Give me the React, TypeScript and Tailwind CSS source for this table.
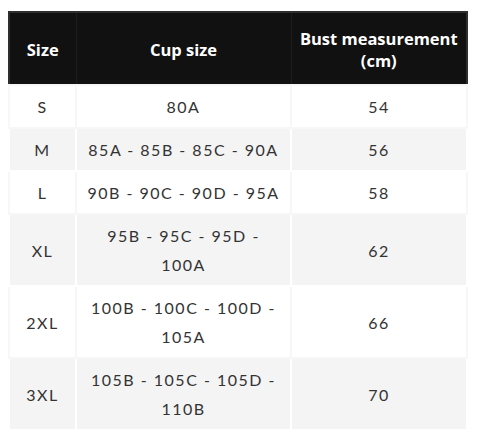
const rows: { size: string; cup: string[]; bust: string }[] = [
  { size: "S", cup: ["80A"], bust: "54" },
  { size: "M", cup: ["85A - 85B - 85C - 90A"], bust: "56" },
  { size: "L", cup: ["90B - 90C - 90D - 95A"], bust: "58" },
  { size: "XL", cup: ["95B - 95C - 95D -", "100A"], bust: "62" },
  { size: "2XL", cup: ["100B - 100C - 100D -", "105A"], bust: "66" },
  { size: "3XL", cup: ["105B - 105C - 105D -", "110B"], bust: "70" },
];

export default function App() {
  return (
    <div className="h-[442px] w-[480px] bg-white pl-[8px] pt-[11px]">
      <table className="w-[460px] table-fixed border-collapse border-2 border-[#2e2e2e] text-center">
        <colgroup>
          <col className="w-[67px]" />
          <col className="w-[215px]" />
          <col />
        </colgroup>
        <thead>
          <tr className="bg-[#111111] font-['Open_Sans',sans-serif] text-[16.5px] leading-[22px] font-bold text-white">
            <th className="h-[73px] border-r border-[#1c1c1c] px-2 pt-[2px] pb-0">Size</th>
            <th className="border-r border-[#1c1c1c] px-2 pt-[2px] pb-0">Cup size</th>
            <th className="px-2 pt-[2px] pb-0">
              Bust measurement
              <br />
              (cm)
            </th>
          </tr>
        </thead>
        <tbody className="font-['Lato',sans-serif] text-[16px] leading-[29px] tracking-[1.5px] text-[#333333]">
          {rows.map((r, i) => {
            const gray = i % 2 === 1;
            const cell = gray
              ? "border-2 border-white bg-[#f4f4f4] px-2 py-[6px]"
              : "border-2 border-[#f7f7f7] bg-white px-2 py-[6px]";
            return (
              <tr key={r.size}>
                <td className={cell}>{r.size}</td>
                <td className={cell}>
                  {r.cup.map((line) => (
                    <div key={line}>{line}</div>
                  ))}
                </td>
                <td className={cell}>{r.bust}</td>
              </tr>
            );
          })}
        </tbody>
      </table>
    </div>
  );
}
